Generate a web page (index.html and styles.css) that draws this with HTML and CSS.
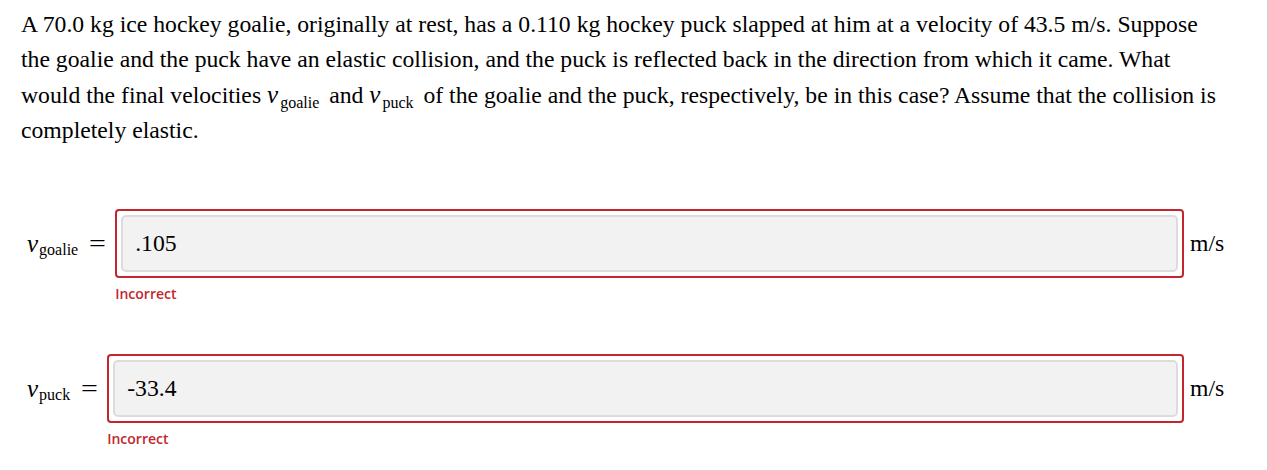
FILE: index.html
```html
<!DOCTYPE html>
<html>
<head>
<meta charset="utf-8">
<link rel="stylesheet" href="styles.css">
</head>
<body>
<div class="page">
  <p class="question">A 70.0 kg ice hockey goalie, originally at rest, has a 0.110 kg hockey puck slapped at him at a velocity of 43.5 m/s. Suppose the goalie and the puck have an elastic collision, and the puck is reflected back in the direction from which it came. What would the final velocities <span class="var">v</span><sub>goalie</sub> and <span class="var">v</span><sub>puck</sub> of the goalie and the puck, respectively, be in this case? Assume that the collision is completely elastic.</p>

  <div class="answer answer-first">
    <div class="row">
      <div class="label"><span class="var">v</span><sub>goalie</sub><span class="eq">=</span></div>
      <div class="field">
        <div class="box"><div class="input">.105</div></div>
        <div class="status">Incorrect</div>
      </div>
      <div class="unit">m/s</div>
    </div>
  </div>

  <div class="answer answer-second">
    <div class="row">
      <div class="label"><span class="var">v</span><sub>puck</sub><span class="eq">=</span></div>
      <div class="field">
        <div class="box"><div class="input">-33.4</div></div>
        <div class="status">Incorrect</div>
      </div>
      <div class="unit">m/s</div>
    </div>
  </div>
</div>
</body>
</html>
```

FILE: styles.css
```css
html, body {
  margin: 0;
  padding: 0;
  background: #fff;
}

.page {
  width: 1268px;
  height: 470px;
  box-sizing: border-box;
  border-right: 1px solid #cfcfcf;
  padding: 7px 36px 0 21px;
  font-family: "Liberation Serif", "Times New Roman", serif;
  color: #000;
}

.question {
  margin: 0;
  font-size: 23.7px;
  line-height: 35px;
}

.question sub {
  margin-left: 1px;
  margin-right: 4px;
}

.var {
  font-style: italic;
  font-size: 25px;
  margin-right: 1px;
}

sub {
  font-size: 16px;
  line-height: 1;
  vertical-align: -5px;
}

.answer-first {
  margin-top: 61px;
}

.answer-second {
  margin-top: 50px;
}

.row {
  display: flex;
  align-items: flex-start;
}

.label {
  font-size: 23.7px;
  padding-left: 6px;
  height: 69px;
  display: flex;
  align-items: center;
  white-space: nowrap;
}

.label sub {
  position: relative;
  top: 6px;
}

.eq {
  font-size: 23px;
  margin-left: 13px;
  margin-right: 11px;
  display: inline-block;
  transform: scaleX(1.3);
}

.field {
  flex: 1;
  display: flex;
  flex-direction: column;
}

.box {
  border: 2px solid #c1272d;
  border-radius: 4px;
  padding: 4px;
  height: 69px;
  box-sizing: border-box;
}

.input {
  height: 100%;
  box-sizing: border-box;
  background: #f2f2f2;
  border: 2px solid #dcdcdc;
  border-radius: 5px;
  padding: 0 11px 0 12px;
  display: flex;
  align-items: center;
  font-size: 23.7px;
}

.status {
  font-family: "Open Sans", "Liberation Sans", sans-serif;
  font-weight: 600;
  font-size: 14px;
  line-height: 20px;
  color: #c1272d;
  margin-top: 6px;
}

.unit {
  font-size: 23.7px;
  height: 69px;
  display: flex;
  align-items: center;
  margin-left: 6px;
  width: 41px;
}
```
